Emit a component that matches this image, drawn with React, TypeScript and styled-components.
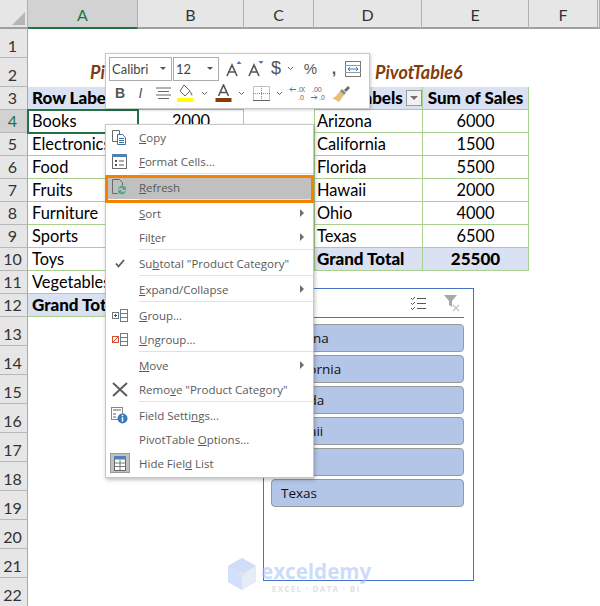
import React from 'react';
import styled, { createGlobalStyle } from 'styled-components';

const GlobalStyle = createGlobalStyle`
    html, body {
        margin: 0;
        padding: 0;
        background: #ffffff;
    }
`;

const Page = styled.div`
    position: relative;
    width: 600px;
    height: 606px;
    overflow: hidden;
    background: #ffffff;
    font-family: Lato, 'Liberation Sans', sans-serif;
`;

const Sheet = styled.div`
    display: grid;
    grid-template-columns: 28px 110px 106px 70px 108px 107px 69px 2px;
    grid-template-rows: 29px 29px 29px repeat(10, 23px) repeat(10, 29px);
`;

const Corner = styled.div`
    position: relative;
    background: #e6e6e6;
    border-bottom: 2px solid #a0a0a0;
    border-right: 1px solid #b0b0b0;
    box-sizing: border-box;

    &::after {
        content: '';
        position: absolute;
        right: 2px;
        bottom: 2px;
        border-style: solid;
        border-width: 0 0 13px 13px;
        border-color: transparent transparent #b5b5b5 transparent;
    }
`;

const ColHead = styled.div<{ $active?: boolean }>`
    box-sizing: border-box;
    display: flex;
    align-items: center;
    justify-content: center;
    padding-top: 1px;
    background: ${(p) => (p.$active ? '#d2d2d2' : '#e6e6e6')};
    border-bottom: 2px solid ${(p) => (p.$active ? '#217346' : '#a0a0a0')};
    border-right: 1px solid #b0b0b0;
    color: ${(p) => (p.$active ? '#217346' : '#333333')};
    font-size: 16px;
`;

const RowHead = styled.div<{ $active?: boolean }>`
    box-sizing: border-box;
    display: flex;
    align-items: flex-end;
    justify-content: center;
    padding-bottom: 1px;
    padding-right: 2px;
    background: ${(p) => (p.$active ? '#d2d2d2' : '#e6e6e6')};
    border-bottom: 1px solid #b8b8b8;
    border-right: 1px solid #a8a8a8;
    color: ${(p) => (p.$active ? '#217346' : '#333333')};
    font-size: 16px;
    line-height: 20px;
`;

const Cell = styled.div<{
    $bold?: boolean;
    $fill?: boolean;
    $center?: boolean;
    $lines?: boolean;
    $left?: boolean;
    $right?: boolean;
    $selected?: boolean;
    $inset?: number;
}>`
    box-sizing: border-box;
    position: relative;
    display: flex;
    align-items: center;
    justify-content: ${(p) => (p.$center ? 'center' : 'flex-start')};
    padding-left: ${(p) => (p.$center ? 0 : (p.$inset ?? 4))}px;
    padding-bottom: 1px;
    white-space: nowrap;
    color: #000000;
    font-size: ${(p) => (p.$bold ? 17 : 16.4)}px;
    font-weight: ${(p) => (p.$bold ? 900 : 400)};
    background: ${(p) => (p.$fill ? '#d9e1f2' : 'transparent')};
    border-bottom: ${(p) => (p.$lines ? '1px solid #a9d08e' : 'none')};
    border-left: ${(p) => (p.$left ? '1px solid #a9d08e' : 'none')};
    border-right: ${(p) => (p.$right ? '1px solid #a9d08e' : 'none')};
    ${(p) => p.$selected && 'outline: 2px solid #217346; outline-offset: -1px; z-index: 1;'}
`;

const Title = styled.div<{ $inset: number }>`
    display: flex;
    align-items: flex-end;
    padding-left: ${(p) => p.$inset}px;
    padding-bottom: 4px;
    white-space: nowrap;
    font-size: 18px;
    font-weight: 700;
    font-style: italic;
    color: #833c0b;
`;

const FilterButton = styled.span`
    position: absolute;
    right: 0;
    top: 3px;
    width: 16px;
    height: 16px;
    box-sizing: border-box;
    border: 1px solid #9a9a9a;
    background: #f1f1f1;
    display: flex;
    align-items: center;
    justify-content: center;

    &::after {
        content: '';
        border-style: solid;
        border-width: 4px 4px 0 4px;
        border-color: #707070 transparent transparent transparent;
    }
`;

/* mini toolbar */
const MiniBar = styled.div`
    position: absolute;
    left: 105px;
    top: 53px;
    width: 265px;
    height: 56px;
    box-sizing: border-box;
    padding: 3px 3px 0 3px;
    display: flex;
    flex-direction: column;
    background: #ffffff;
    border: 1px solid #c8c8c8;
    box-shadow: 1px 1px 3px rgba(0, 0, 0, 0.2);
    z-index: 3;
`;

const BarRow = styled.div<{ $h: number; $inset?: number }>`
    display: flex;
    align-items: center;
    height: ${(p) => p.$h}px;
    padding-left: ${(p) => p.$inset ?? 0}px;
`;

const Combo = styled.div<{ $w: number }>`
    width: ${(p) => p.$w}px;
    height: 24px;
    box-sizing: border-box;
    margin-right: 1px;
    padding-left: 2px;
    display: flex;
    align-items: center;
    justify-content: space-between;
    border: 1px solid #ababab;
    font-size: 13px;
    color: #444444;
`;

const Caret = styled.span`
    display: block;
    margin-right: 5px;
    border-style: solid;
    border-width: 3px 3px 0 3px;
    border-color: #555555 transparent transparent transparent;
`;

const Tool = styled.span<{ $w: number; $size?: number; $bold?: boolean; $italic?: boolean }>`
    width: ${(p) => p.$w}px;
    height: 22px;
    flex: none;
    display: flex;
    align-items: center;
    justify-content: center;
    color: #555555;
    font-family: 'Liberation Sans', sans-serif;
    font-size: ${(p) => p.$size ?? 14}px;
    font-weight: ${(p) => (p.$bold ? 700 : 400)};
    font-style: ${(p) => (p.$italic ? 'italic' : 'normal')};
`;

const SmallCaret = styled.span<{ $w: number }>`
    width: ${(p) => p.$w}px;
    flex: none;
    display: flex;
    justify-content: center;

    svg {
        display: block;
    }
`;

/* context menu */
const Menu = styled.div`
    position: absolute;
    left: 105px;
    top: 124px;
    width: 209px;
    height: 354px;
    box-sizing: border-box;
    background: #ffffff;
    border: 1px solid #c6c6c6;
    box-shadow: 1px 2px 4px rgba(0, 0, 0, 0.25);
    z-index: 2;
`;

const Item = styled.div<{ $hot?: boolean }>`
    position: relative;
    height: 24px;
    display: flex;
    align-items: center;
    white-space: nowrap;
    font-family: 'Open Sans', sans-serif;
    font-size: 11.5px;
    color: #5a5a5a;
    background: ${(p) => (p.$hot ? '#c0c0c0' : 'transparent')};

    ${(p) =>
        p.$hot &&
        `&::after {
            content: '';
            position: absolute;
            left: -1px;
            right: -1px;
            top: 0;
            bottom: -4px;
            border: 3px solid #f58100;
            pointer-events: none;
        }`}
`;

const IconSlot = styled.span`
    width: 27px;
    margin-right: 6px;
    flex: none;
    display: flex;
    align-items: center;
    justify-content: center;
`;

const SubArrow = styled.span`
    position: absolute;
    right: 9px;
    top: 8px;
    border-style: solid;
    border-width: 4px 0 4px 4px;
    border-color: transparent transparent transparent #6e6e6e;
`;

const Separator = styled.div`
    height: 1px;
    margin: 0 0 1px 33px;
    background: #e1e1e1;
`;

const HideBox = styled.span`
    width: 20px;
    height: 20px;
    box-sizing: border-box;
    display: flex;
    align-items: center;
    justify-content: center;
    background: #c0c0c0;
    border: 1px solid #9a9a9a;
`;

/* slicer */
const Slicer = styled.div`
    position: absolute;
    left: 263px;
    top: 288px;
    width: 211px;
    height: 293px;
    box-sizing: border-box;
    padding: 0 9px 0 7px;
    background: #ffffff;
    border: 1px solid #4472c4;
    z-index: 1;
`;

const SlicerHead = styled.div`
    height: 29px;
    box-sizing: border-box;
    display: flex;
    align-items: center;
    justify-content: flex-end;
    gap: 17px;
    padding-right: 3px;
    margin-bottom: 6px;
    border-bottom: 1px solid #4472c4;
`;

const SlicerList = styled.div`
    display: flex;
    flex-direction: column;
    gap: 3px;
`;

const SlicerItem = styled.div`
    height: 28px;
    box-sizing: border-box;
    padding-left: 9px;
    display: flex;
    align-items: center;
    background: #b4c6e7;
    border: 1px solid #999999;
    border-radius: 4px;
    font-family: 'Open Sans', sans-serif;
    font-size: 13.5px;
    color: #111111;
`;

/* watermark */
const Watermark = styled.div`
    position: absolute;
    left: 228px;
    top: 558px;
    display: flex;
    gap: 5px;
    z-index: 4;
    pointer-events: none;
`;

const MarkText = styled.div`
    display: flex;
    flex-direction: column;
    align-items: center;
    padding-top: 2px;
`;

const MarkName = styled.span`
    font-family: 'Open Sans', sans-serif;
    font-size: 20.6px;
    line-height: 22px;
    font-weight: 700;
    color: rgba(170, 196, 250, 0.6);
`;

const MarkTag = styled.span`
    margin-top: 2px;
    font-family: 'Open Sans', sans-serif;
    font-size: 8px;
    line-height: 9px;
    font-weight: 700;
    letter-spacing: 1.3px;
    color: #e2e2e2;
`;

const leftRows = [
    { n: 4, label: 'Books', value: '2000' },
    { n: 5, label: 'Electronics' },
    { n: 6, label: 'Food' },
    { n: 7, label: 'Fruits' },
    { n: 8, label: 'Furniture' },
    { n: 9, label: 'Sports' },
    { n: 10, label: 'Toys' },
    { n: 11, label: 'Vegetables' },
];

const rightRows: Record<number, [string, string]> = {
    4: ['Arizona', '6000'],
    5: ['California', '1500'],
    6: ['Florida', '5500'],
    7: ['Hawaii', '2000'],
    8: ['Ohio', '4000'],
    9: ['Texas', '6500'],
};

const tail = [13, 14, 15, 16, 17, 18, 19, 20, 21, 22];

const Blank = () => (
    <>
        <Cell />
        <Cell />
    </>
);

const DownCaret = () => (
    <svg width="7" height="5" viewBox="0 0 7 5">
        <path d="M1 1l2.500 2.500L6 1" fill="none" stroke="#666" strokeWidth="1" />
    </svg>
);

const FontStep = ({ up }: { up?: boolean }) => (
    <svg width="16" height="18" viewBox="0 0 16 18">
        <path d="M1 16L6 5l5 11M3 12h6" fill="none" stroke="#555" strokeWidth="1.6" />
        <path d={up ? 'M10.500 4l2.500-3 2.500 3z' : 'M10.500 1l2.500 3 2.500-3z'} fill="#3f7fbf" />
    </svg>
);

const WrapIcon = () => (
    <svg width="16" height="16" viewBox="0 0 16 16">
        <rect x="0.500" y="0.500" width="15" height="15" fill="none" stroke="#777" />
        <path d="M0 4.500h16M0 11.500h16" stroke="#999" />
        <path d="M3 8h10M3 8l2-2M3 8l2 2M13 8l-2-2M13 8l-2 2" fill="none" stroke="#2f7fc1" />
    </svg>
);

const AlignIcon = () => (
    <svg width="15" height="12" viewBox="0 0 15 12">
        <path d="M0 1h15M2 4.500h11M0 8h15M2 11.500h11" stroke="#666" />
    </svg>
);

const FillIcon = () => (
    <svg width="17" height="19" viewBox="0 0 17 19">
        <path d="M7 1l6 6-5 5-5-5z" fill="#fff" stroke="#666" />
        <path d="M13 7c2 2 3 3 2 5-1-1-2-3-2-5z" fill="#888" />
        <rect x="0" y="14" width="16" height="4" fill="#ffff00" />
    </svg>
);

const ColorAIcon = () => (
    <svg width="17" height="19" viewBox="0 0 17 19">
        <path d="M3.500 12L8.500 1l5 11M5.500 8.500h6" fill="none" stroke="#555" strokeWidth="1.6" />
        <rect x="0.500" y="14" width="16" height="4" fill="#833c0b" />
    </svg>
);

const BorderIcon = () => (
    <svg width="17" height="15" viewBox="0 0 17 15">
        <rect x="0.500" y="0.500" width="16" height="14" fill="none" stroke="#888" strokeDasharray="1 1" />
        <path d="M8.500 0v15M0 7.500h17" stroke="#888" strokeDasharray="1 1" />
        <path d="M0 14.500h17" stroke="#666" />
    </svg>
);

const DecimalIcon = ({ more }: { more?: boolean }) => (
    <svg width="16" height="15" viewBox="0 0 16 15">
        <path d={more ? 'M1 3.500h6M1 3.500l2-2M1 3.500l2 2' : 'M1 11.500h6M7 11.500l-2-2M7 11.500l-2 2'} fill="none" stroke="#2f7fc1" />
        <text x={more ? 8 : 2} y="6" fontSize="7" fontFamily="Liberation Sans" fill="#666">.00</text>
        <text x="9" y="14" fontSize="7" fontFamily="Liberation Sans" fill="#666">.0</text>
    </svg>
);

const BrushIcon = () => (
    <svg width="18" height="17" viewBox="0 0 18 17">
        <path d="M8 6l4 4-5 7-7-4c3 0 5-3 8-7z" fill="#e9bd78" />
        <path d="M8 6l2-2 4 4-2 2z" fill="#8a8a8a" />
        <path d="M12 5l4-4 2 2-4 4z" fill="#6a6a6a" />
    </svg>
);

const CopyIcon = () => (
    <svg width="17" height="17" viewBox="0 0 17 17">
        <path d="M1.500 1.500h7v11h-7z" fill="#fff" stroke="#6a6a6a" />
        <path d="M6.500 5.500h5l3 3v7h-8z" fill="#fff" stroke="#3f6f9f" />
        <path d="M8 9.500h5M8 11.500h5M8 13.500h5" stroke="#3f6f9f" />
    </svg>
);

const FormatIcon = () => (
    <svg width="15" height="15" viewBox="0 0 15 15">
        <rect x="0.500" y="0.500" width="14" height="14" fill="#fff" stroke="#6a6a6a" />
        <rect x="0" y="0" width="15" height="3" fill="#4f81b5" />
        <rect x="3" y="6" width="2" height="2" fill="#555" />
        <rect x="3" y="10" width="2" height="2" fill="#555" />
        <path d="M7 7h5M7 11h5" stroke="#555" />
    </svg>
);

const RefreshIcon = () => (
    <svg width="17" height="18" viewBox="0 0 17 18">
        <path d="M1.500 1.500h7l3 3v3M1.500 1.500v14h5" fill="none" stroke="#6a6a6a" />
        <path d="M7 11a4 4 0 0 1 7-2l1-1v4h-4l1-1a2.500 2.500 0 0 0-4 0z" fill="#5fa58a" />
        <path d="M15 13a4 4 0 0 1-7 2l-1 1v-4h4l-1 1a2.500 2.500 0 0 0 4 0z" fill="#5fa58a" />
    </svg>
);

const CheckIcon = () => (
    <svg width="10" height="9" viewBox="0 0 10 9">
        <path d="M1 4.500L3.500 7.500 9 1" fill="none" stroke="#555" strokeWidth="1.700" />
    </svg>
);

const GroupIcon = ({ un }: { un?: boolean }) => (
    <svg width="16" height="13" viewBox="0 0 16 13">
        <rect x="0.500" y="3.500" width="6" height="6" fill="#fff" stroke={un ? '#d9502e' : '#777'} />
        {un ? (
            <path d="M1 9l5-5" stroke="#d9502e" />
        ) : (
            <path d="M2 6.500h3M3.500 5v3" stroke="#555" />
        )}
        <rect x="8.500" y="0.500" width="7" height="12" fill="#fff" stroke="#5f7f9f" />
        <path d="M8 4.500h8M8 8.500h8" stroke="#5f7f9f" />
    </svg>
);

const RemoveIcon = () => (
    <svg width="16" height="15" viewBox="0 0 16 15">
        <path d="M1 1l14 13M15 1L1 14" stroke="#5e5e5e" strokeWidth="2" />
    </svg>
);

const SettingsIcon = () => (
    <svg width="17" height="17" viewBox="0 0 17 17">
        <rect x="0.500" y="0.500" width="11" height="12" fill="#fff" stroke="#888" />
        <rect x="2" y="2" width="8" height="2" fill="#b0b0b0" />
        <path d="M2 6h3v2H2zM2 9h3v2H2z" fill="#b0b0b0" />
        <circle cx="11.500" cy="11.500" r="5" fill="#3a7ab8" />
        <path d="M11.500 7.800v1.500M11.500 10.300v4.200" stroke="#fff" strokeWidth="1.500" />
    </svg>
);

const FieldListIcon = () => (
    <svg width="12" height="15" viewBox="0 0 12 15">
        <rect x="0.500" y="0.500" width="11" height="14" fill="#fff" stroke="#666" />
        <rect x="0" y="0" width="12" height="3.500" fill="#4f81b5" />
        <path d="M0.500 7h11M0.500 10.500h11M6 3.500v11" stroke="#777" />
    </svg>
);

const SelectIcon = () => (
    <svg width="17" height="15" viewBox="0 0 17 15">
        <path d="M1 2l1.500 1.500L5 1M1 7l1.500 1.500L5 6M1 12l1.500 1.500L5 11" fill="none" stroke="#555" />
        <path d="M7 2.500h9M7 7.500h9M7 12.500h9" stroke="#555" />
    </svg>
);

const ClearIcon = () => (
    <svg width="17" height="17" viewBox="0 0 17 17">
        <path d="M0 0h13L8 6v6L5 10V6z" fill="#a8a8a8" />
        <path d="M9 10l6 6M15 10l-6 6" stroke="#c4c4c4" strokeWidth="1.300" />
    </svg>
);

const LogoMark = () => (
    <svg width="28" height="32" viewBox="0 0 28 32">
        <path d="M14 0l14 8v16l-14 8L0 24V8z" fill="#e6ecf7" />
        <path d="M14 0l14 8-14 8L0 8z" fill="#ccd9f5" opacity="0.8" />
        <path d="M0 8l14 8v16L0 24z" fill="#d3e0fb" />
        <path d="M9 16l5-3 5 3-5 3z" fill="#dfe3ea" />
    </svg>
);

const App: React.FC = () => {
    return (
        <Page>
            <GlobalStyle />
            <Sheet>
                <Corner />
                <ColHead $active>A</ColHead>
                <ColHead>B</ColHead>
                <ColHead>C</ColHead>
                <ColHead>D</ColHead>
                <ColHead>E</ColHead>
                <ColHead>F</ColHead>
                <ColHead />

                <RowHead>1</RowHead>
                <Cell /><Cell /><Cell /><Cell /><Cell /><Cell /><Cell />

                <RowHead>2</RowHead>
                <Title $inset={62}>PivotTable5</Title>
                <Cell />
                <Cell />
                <Title $inset={61}>PivotTable6</Title>
                <Cell /><Cell /><Cell />

                <RowHead>3</RowHead>
                <Cell $bold $fill $lines>Row Labels</Cell>
                <Cell $bold $fill $lines $left $right $center>Sum of Sales</Cell>
                <Cell />
                <Cell $bold $fill $lines $left $inset={2}>
                    Row Labels
                    <FilterButton />
                </Cell>
                <Cell $bold $fill $lines $left $right $center>Sum of Sales</Cell>
                <Cell /><Cell />

                {leftRows.map((row) => {
                    const right = rightRows[row.n];
                    return (
                        <React.Fragment key={row.n}>
                            <RowHead $active={row.n === 4}>{row.n}</RowHead>
                            <Cell $lines $selected={row.n === 4}>{row.label}</Cell>
                            <Cell $lines $left $right $center>{row.value}</Cell>
                            <Cell />
                            {right && (
                                <>
                                    <Cell $lines $left $inset={2}>{right[0]}</Cell>
                                    <Cell $lines $left $right $center>{right[1]}</Cell>
                                </>
                            )}
                            {row.n === 10 && (
                                <>
                                    <Cell $bold $fill $lines $left $inset={2}>Grand Total</Cell>
                                    <Cell $bold $fill $lines $left $right $center>25500</Cell>
                                </>
                            )}
                            {row.n === 11 && <Blank />}
                            <Cell /><Cell />
                        </React.Fragment>
                    );
                })}

                <RowHead>12</RowHead>
                <Cell $bold $fill $lines>Grand Total</Cell>
                <Cell $fill $lines $left $right />
                <Cell /><Blank /><Cell /><Cell />

                {tail.map((n) => (
                    <React.Fragment key={n}>
                        <RowHead>{n}</RowHead>
                        <Cell /><Cell /><Cell /><Cell /><Cell /><Cell /><Cell />
                    </React.Fragment>
                ))}
            </Sheet>

            <MiniBar>
                <BarRow $h={23}>
                    <Combo $w={63}>Calibri<Caret /></Combo>
                    <Combo $w={46}>12<Caret /></Combo>
                    <Tool $w={20} style={{ marginLeft: 4 }}><FontStep up /></Tool>
                    <Tool $w={23}><FontStep /></Tool>
                    <Tool $w={18} $size={18}>$</Tool>
                    <SmallCaret $w={11}><DownCaret /></SmallCaret>
                    <Tool $w={29} $size={15}>%</Tool>
                    <Tool $w={18} $size={16} $bold>,</Tool>
                    <Tool $w={20}><WrapIcon /></Tool>
                </BarRow>
                <BarRow $h={26} $inset={2}>
                    <Tool $w={18} $bold>B</Tool>
                    <Tool $w={23} $italic>I</Tool>
                    <Tool $w={22}><AlignIcon /></Tool>
                    <Tool $w={22}><FillIcon /></Tool>
                    <SmallCaret $w={16}><DownCaret /></SmallCaret>
                    <Tool $w={22}><ColorAIcon /></Tool>
                    <SmallCaret $w={14}><DownCaret /></SmallCaret>
                    <Tool $w={26}><BorderIcon /></Tool>
                    <SmallCaret $w={10}><DownCaret /></SmallCaret>
                    <Tool $w={26}><DecimalIcon more /></Tool>
                    <Tool $w={16}><DecimalIcon /></Tool>
                    <Tool $w={30}><BrushIcon /></Tool>
                </BarRow>
            </MiniBar>

            <Menu>
                <Item><IconSlot><CopyIcon /></IconSlot><span><u>C</u>opy</span></Item>
                <Item><IconSlot><FormatIcon /></IconSlot><span><u>F</u>ormat Cells...</span></Item>
                <Separator />
                <Item $hot><IconSlot><RefreshIcon /></IconSlot><span><u>R</u>efresh</span></Item>
                <Separator />
                <Item><IconSlot /><span><u>S</u>ort</span><SubArrow /></Item>
                <Item><IconSlot /><span>Fil<u>t</u>er</span><SubArrow /></Item>
                <Separator />
                <Item><IconSlot><CheckIcon /></IconSlot><span>Su<u>b</u>total "Product Category"</span></Item>
                <Separator />
                <Item><IconSlot /><span><u>E</u>xpand/Collapse</span><SubArrow /></Item>
                <Separator />
                <Item><IconSlot><GroupIcon /></IconSlot><span><u>G</u>roup...</span></Item>
                <Item><IconSlot><GroupIcon un /></IconSlot><span><u>U</u>ngroup...</span></Item>
                <Separator />
                <Item><IconSlot /><span><u>M</u>ove</span><SubArrow /></Item>
                <Item><IconSlot><RemoveIcon /></IconSlot><span>Remo<u>v</u>e "Product Category"</span></Item>
                <Separator />
                <Item><IconSlot><SettingsIcon /></IconSlot><span>Field Setti<u>n</u>gs...</span></Item>
                <Item><IconSlot /><span>PivotTable <u>O</u>ptions...</span></Item>
                <Item><IconSlot><HideBox><FieldListIcon /></HideBox></IconSlot><span>Hide Fiel<u>d</u> List</span></Item>
            </Menu>

            <Slicer>
                <SlicerHead>
                    <SelectIcon />
                    <ClearIcon />
                </SlicerHead>
                <SlicerList>
                    <SlicerItem>Arizona</SlicerItem>
                    <SlicerItem>California</SlicerItem>
                    <SlicerItem>Florida</SlicerItem>
                    <SlicerItem>Hawaii</SlicerItem>
                    <SlicerItem>Ohio</SlicerItem>
                    <SlicerItem>Texas</SlicerItem>
                </SlicerList>
            </Slicer>

            <Watermark>
                <LogoMark />
                <MarkText>
                    <MarkName>exceldemy</MarkName>
                    <MarkTag>EXCEL · DATA · BI</MarkTag>
                </MarkText>
            </Watermark>
        </Page>
    );
};

export default App;
